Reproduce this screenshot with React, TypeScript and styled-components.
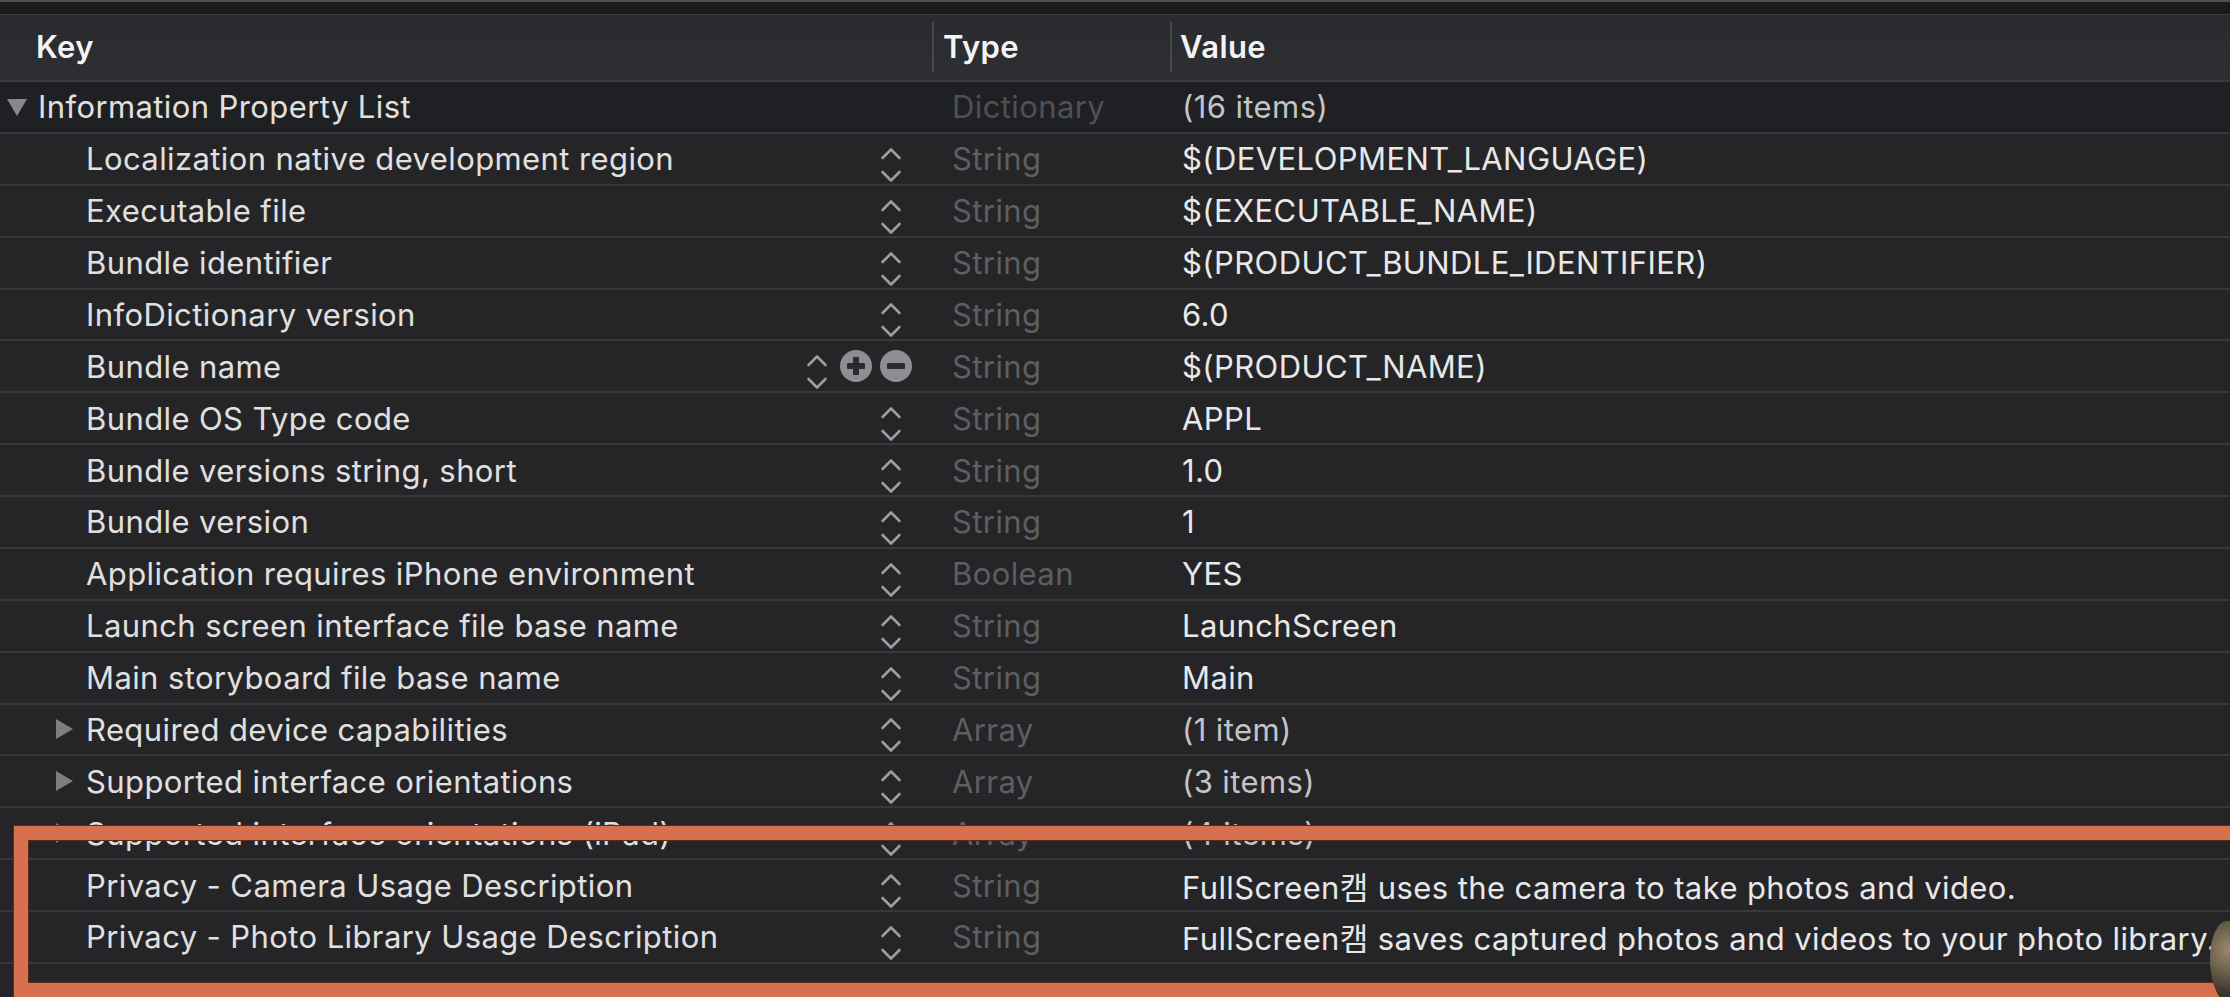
import React from "react";
import styled, { createGlobalStyle } from "styled-components";

const GlobalStyle = createGlobalStyle`
  html, body {
    margin: 0;
    padding: 0;
    background: #252528;
    overflow: hidden;
  }
  * { box-sizing: border-box; }
`;

const FONT = `Inter, "Noto Sans CJK KR", "Liberation Sans", sans-serif`;
const ROW_H = 51.88;

const Page = styled.div`
  position: relative;
  width: 2230px;
  height: 997px;
  overflow: hidden;
  background: #252528;
  font-family: ${FONT};
  font-size: 31px;
  letter-spacing: 0.4px;
`;

const TopStrip = styled.div`
  height: 15px;
  background: #1b1b1d;
  border-top: 2px solid #4e4e51;
  border-bottom: 1px solid #3b3c40;
`;

const Grid = styled.div`
  display: grid;
  grid-template-columns: 932px 238px 1fr;
`;

const Header = styled(Grid)`
  height: 67px;
  background: linear-gradient(#2a2b2f, #2e2f33);
  border-bottom: 2px solid #3a3b3f;
`;

const HeaderCell = styled.div<{ $sep?: boolean; $pad: number }>`
  position: relative;
  display: flex;
  align-items: center;
  padding-left: ${(p) => p.$pad}px;
  padding-bottom: 2px;
  color: #f3f3f3;
  font-weight: 600;
  &::before {
    content: "";
    display: ${(p) => (p.$sep ? "block" : "none")};
    position: absolute;
    left: 0;
    top: 7px;
    height: 50px;
    width: 2px;
    background: #46474b;
  }
`;

const Row = styled(Grid)<{ $dark?: boolean }>`
  height: ${ROW_H}px;
  background: ${(p) => (p.$dark ? "#1f2023" : "#252528")};
  border-bottom: 2px solid #37383b;
`;

const KeyCell = styled.div<{ $level: number }>`
  display: flex;
  align-items: center;
  padding-left: ${(p) => (p.$level === 0 ? 6 : 54)}px;
  color: #e0e0e0;
  white-space: nowrap;
  min-width: 0;
`;

const Disclosure = styled.span`
  display: flex;
  align-items: center;
  flex: 0 0 32px;
  height: 100%;
`;

const KeyLabel = styled.span`
  flex: 1 1 auto;
  overflow: hidden;
`;

const Controls = styled.span<{ $pad: number }>`
  display: flex;
  align-items: center;
  gap: 8px;
  padding-right: ${(p) => p.$pad}px;
`;

const Stepper = styled.svg`
  margin-top: 12px;
  flex: none;
`;

const RoundBtn = styled.span<{ $first?: boolean }>`
  width: 32px;
  height: 32px;
  margin-left: ${(p) => (p.$first ? 4 : 0)}px;
  border-radius: 50%;
  background: #8e8e92;
  display: flex;
  align-items: center;
  justify-content: center;
  flex: none;
`;

const TypeCell = styled.div<{ $dim?: boolean }>`
  display: flex;
  align-items: center;
  padding-left: 20px;
  color: ${(p) => (p.$dim ? "#4f5054" : "#5e5e62")};
`;

const ValueCell = styled.div<{ $muted?: boolean }>`
  display: flex;
  align-items: center;
  padding-left: 12px;
  white-space: nowrap;
  color: ${(p) => (p.$muted ? "#c4c4c6" : "#e8e8e8")};
`;

const Highlight = styled.div`
  position: absolute;
  left: 14px;
  top: 826px;
  right: -40px;
  height: 171px;
  border: 14px solid #d6704f;
  box-shadow: 0 0 0 1px #5a2a1c, inset 0 0 0 1px #5a2a1c;
  pointer-events: none;
`;

const Blob = styled.div`
  position: absolute;
  right: -16px;
  bottom: -6px;
  width: 36px;
  height: 82px;
  border-radius: 60% 30% 0 70%;
  background: radial-gradient(circle at 55% 35%, #9c8a6c 0%, #73664f 35%, #463d32 70%, #2a2520 100%);
`;

type RowData = {
  key: string;
  type: string;
  value: string;
  level: number;
  disclosure?: "open" | "closed";
  muted?: boolean;
  hover?: boolean;
  noStepper?: boolean;
  dark?: boolean;
  dimType?: boolean;
};

const rows: RowData[] = [
  { key: "Information Property List", type: "Dictionary", value: "(16 items)", level: 0, disclosure: "open", muted: true, noStepper: true, dark: true, dimType: true },
  { key: "Localization native development region", type: "String", value: "$(DEVELOPMENT_LANGUAGE)", level: 1 },
  { key: "Executable file", type: "String", value: "$(EXECUTABLE_NAME)", level: 1 },
  { key: "Bundle identifier", type: "String", value: "$(PRODUCT_BUNDLE_IDENTIFIER)", level: 1 },
  { key: "InfoDictionary version", type: "String", value: "6.0", level: 1 },
  { key: "Bundle name", type: "String", value: "$(PRODUCT_NAME)", level: 1, hover: true },
  { key: "Bundle OS Type code", type: "String", value: "APPL", level: 1 },
  { key: "Bundle versions string, short", type: "String", value: "1.0", level: 1 },
  { key: "Bundle version", type: "String", value: "1", level: 1 },
  { key: "Application requires iPhone environment", type: "Boolean", value: "YES", level: 1 },
  { key: "Launch screen interface file base name", type: "String", value: "LaunchScreen", level: 1 },
  { key: "Main storyboard file base name", type: "String", value: "Main", level: 1 },
  { key: "Required device capabilities", type: "Array", value: "(1 item)", level: 1, disclosure: "closed", muted: true },
  { key: "Supported interface orientations", type: "Array", value: "(3 items)", level: 1, disclosure: "closed", muted: true },
  { key: "Supported interface orientations (iPad)", type: "Array", value: "(4 items)", level: 1, disclosure: "closed", muted: true },
  { key: "Privacy - Camera Usage Description", type: "String", value: "FullScreen캠 uses the camera to take photos and video.", level: 1 },
  { key: "Privacy - Photo Library Usage Description", type: "String", value: "FullScreen캠 saves captured photos and videos to your photo library.", level: 1 },
];

const Triangle = ({ open }: { open: boolean }) =>
  open ? (
    <svg width="22" height="20" viewBox="0 0 22 20">
      <polygon points="1,2 21,2 11,19" fill="#88888b" />
    </svg>
  ) : (
    <svg width="20" height="22" viewBox="0 0 20 22">
      <polygon points="2,1 19,11 2,21" fill="#7e7e81" />
    </svg>
  );

const StepperIcon = () => (
  <Stepper width="22" height="36" viewBox="0 0 22 36">
    <polyline points="2.5,11 11,2.5 19.5,11" fill="none" stroke="#9d9da1" strokeWidth="2.6" strokeLinecap="round" strokeLinejoin="round" />
    <polyline points="2.5,25 11,33.5 19.5,25" fill="none" stroke="#9d9da1" strokeWidth="2.6" strokeLinecap="round" strokeLinejoin="round" />
  </Stepper>
);

const PlusIcon = () => (
  <svg width="20" height="20" viewBox="0 0 20 20">
    <rect x="7" y="1" width="6" height="18" rx="1" fill="#2b2b2e" />
    <rect x="1" y="7" width="18" height="6" rx="1" fill="#2b2b2e" />
  </svg>
);

const MinusIcon = () => (
  <svg width="20" height="20" viewBox="0 0 20 20">
    <rect x="1" y="7" width="18" height="6" rx="1" fill="#2b2b2e" />
  </svg>
);

export default function App() {
  return (
    <Page>
      <GlobalStyle />
      <TopStrip />
      <Header>
        <HeaderCell $pad={36}>Key</HeaderCell>
        <HeaderCell $sep $pad={11}>Type</HeaderCell>
        <HeaderCell $sep $pad={10}>Value</HeaderCell>
      </Header>
      {rows.map((r) => (
        <Row key={r.key} $dark={r.dark}>
          <KeyCell $level={r.level}>
            <Disclosure>{r.disclosure && <Triangle open={r.disclosure === "open"} />}</Disclosure>
            <KeyLabel>{r.key}</KeyLabel>
            {!r.noStepper && (
              <Controls $pad={r.hover ? 20 : 30}>
                <StepperIcon />
                {r.hover && (
                  <>
                    <RoundBtn $first>
                      <PlusIcon />
                    </RoundBtn>
                    <RoundBtn>
                      <MinusIcon />
                    </RoundBtn>
                  </>
                )}
              </Controls>
            )}
          </KeyCell>
          <TypeCell $dim={r.dimType}>{r.type}</TypeCell>
          <ValueCell $muted={r.muted}>{r.value}</ValueCell>
        </Row>
      ))}
      <Row>
        <KeyCell $level={1} />
        <TypeCell />
        <ValueCell />
      </Row>
      <Highlight />
      <Blob />
    </Page>
  );
}
